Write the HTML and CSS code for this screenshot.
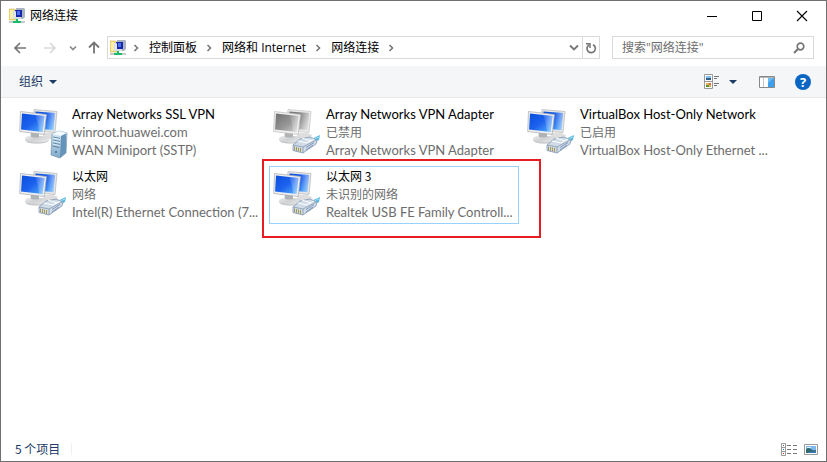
FILE: index.html
```html
<!DOCTYPE html>
<html lang="zh-CN">
<head>
<meta charset="utf-8">
<meta name="viewport" content="width=device-width, initial-scale=1">
<title>网络连接</title>
<link rel="stylesheet" href="styles.css">
</head>
<body>
<svg class="defs" aria-hidden="true">
  <defs>
    <linearGradient id="blue" x1="0" y1="0" x2="1" y2="1">
      <stop offset="0" stop-color="#0a4fdc"/><stop offset=".5" stop-color="#1d62ee"/><stop offset="1" stop-color="#55b4fb"/>
    </linearGradient>
    <linearGradient id="gray" x1="0" y1="0" x2="1" y2="1">
      <stop offset="0" stop-color="#707070"/><stop offset=".55" stop-color="#969696"/><stop offset="1" stop-color="#d2d2d2"/>
    </linearGradient>
    <linearGradient id="shine" x1="0" y1="0" x2="1" y2="0">
      <stop offset="0" stop-color="#fff" stop-opacity=".05"/><stop offset="1" stop-color="#fff" stop-opacity=".5"/>
    </linearGradient>
    <linearGradient id="metal" x1="0" y1="0" x2="1" y2="1">
      <stop offset="0" stop-color="#f6f6f6"/><stop offset=".5" stop-color="#cfd1d3"/><stop offset="1" stop-color="#f2f2f2"/>
    </linearGradient>
    <linearGradient id="steel" x1="0" y1="0" x2="0" y2="1">
      <stop offset="0" stop-color="#dcecf6"/><stop offset="1" stop-color="#7fa9c8"/>
    </linearGradient>
    <symbol id="stands" viewBox="0 0 50 54">
      <path d="M25 28h9l5 2q-1 4-9 4l-6-3z" fill="#dedede"/>
      <path d="M11 28h9v3q10 0 10 3 0 4.500-12 4.500-12 0-12-4.500 0-3 5-3z" fill="url(#metal)"/>
      <path d="M6 34q1 3.500 12 3.500 11 0 12-3.500 0 4.500-12 4.500-12 0-12-4.500z" fill="#c2c4c6"/>
      <path d="M12 28h8v4q-4 1-8 0z" fill="#b0b3b6"/>
    </symbol>
    <symbol id="pair" viewBox="0 0 50 54">
      <use href="#stands"/>
      <path d="M15 4.500l23 2-2 21-23-2z" fill="#e4e5e6" stroke="#b4b6b8" stroke-width=".7"/>
      <path d="M16.500 6.500l19.500 1.500-1.700 17-19-1.500z" fill="url(#blue)"/>
      <path d="M28 7.500l8 .5-1.700 17-6-.5z" fill="url(#shine)"/>
      <path d="M1.500 6.500l26 3-2.300 20-24.500-3z" fill="#eeeff0" stroke="#a9abad" stroke-width=".7"/>
      <path d="M3 8.500l22.500 2.600-2 16-21.500-2.600z" fill="url(#blue)"/>
      <path d="M16 10l9.500 1.100-2 16-3.500-.4q-.5-9-4-16.700z" fill="url(#shine)"/>
    </symbol>
    <symbol id="pair-off" viewBox="0 0 50 54">
      <use href="#stands"/>
      <path d="M15 4.500l23 2-2 21-23-2z" fill="#e9e9e9" stroke="#c4c4c4" stroke-width=".7"/>
      <path d="M16.500 6.500l19.500 1.500-1.700 17-19-1.500z" fill="url(#gray)"/>
      <path d="M28 7.500l8 .5-1.700 17-6-.5z" fill="url(#shine)"/>
      <path d="M1.500 6.500l26 3-2.300 20-24.500-3z" fill="#f0f0f0" stroke="#bcbcbc" stroke-width=".7"/>
      <path d="M3 8.500l22.500 2.600-2 16-21.500-2.600z" fill="url(#gray)"/>
      <path d="M16 10l9.500 1.100-2 16-3.500-.4q-.5-9-4-16.700z" fill="url(#shine)"/>
    </symbol>
    <symbol id="plug" viewBox="0 0 50 54">
      <path d="M36 35l11-5-1 5-8 4z" fill="#58b9de"/>
      <path d="M37 35.500l9-3.500" stroke="#9fe0f5" fill="none"/>
      <path d="M27 34l10-2 7 3-1 4-13 9-10-2.500v-5.500z" fill="#d0dbe8" stroke="#8298b2" stroke-width=".8"/>
      <path d="M20 40l10 2 13-7M30 42v6" fill="none" stroke="#8499b0" stroke-width=".8"/>
      <path d="M25 36l9 2 7-4M29 33l9 3" fill="none" stroke="#fff" stroke-width="1"/>
      <path d="M33 42.500l8-5M33 45l7-5" fill="none" stroke="#6f88ad" stroke-width=".8"/>
      <path d="M21.500 41.500v4M23.500 42v4M25.500 42.500v4M27.500 43v4" stroke="#a69a58" stroke-width="1"/>
    </symbol>
    <symbol id="server" viewBox="0 0 50 54">
      <path d="M33 29l7-3 8 2-1 20-6 5-9-3z" fill="url(#steel)" stroke="#7095b2" stroke-width=".7"/>
      <path d="M33 29l9 2 6-3-8-2z" fill="#f2fafe"/>
      <path d="M42 31l5-2.500v19l-6 5z" fill="#6494b9"/>
      <path d="M34 32l7 1.500M34 35l7 1.500M34 38l7 1.500M33.500 41l7 1.500" stroke="#5684a8" stroke-width="1"/>
      <path d="M34 33l7 1.500M34 36l7 1.500M34 39l7 1.500" stroke="#fff" stroke-width=".6"/>
      <circle cx="37" cy="47" r="1" fill="#426f94"/>
    </symbol>
    <symbol id="net" viewBox="0 0 16 16">
      <path d="M0 1h5l2 1v10H0z" fill="#f5dc78" stroke="#d5b958" stroke-width=".6"/>
      <path d="M1 2h3v9H1z" fill="#fbeeaa"/>
      <path d="M7 0h8l1 1v8l-2 2H7z" fill="#a9b4c2"/>
      <path d="M4 3h8v8H4z" fill="#d7dde5"/>
      <path d="M6 2h7v7H6z" fill="#1827a8"/>
      <path d="M8 3h3v4H8z" fill="#4c72ef"/>
      <path d="M5 4l2-1v6l-2 1z" fill="#dfe6f4"/>
      <path d="M7 11h2v2h3v2H4v-2h3z" fill="#18ba6b"/>
      <path d="M0 14h4M12 14h4" stroke="#b7babd" stroke-width="1.600"/>
    </symbol>
    <symbol id="chev" viewBox="0 0 6 8"><path d="M1.500 1L4.500 4 1.500 7" fill="none" stroke="#777" stroke-width="1.600"/></symbol>
  </defs>
</svg>

<main class="window">
  <header class="titlebar">
    <svg class="ic16" aria-hidden="true"><use href="#net"/></svg>
    <h1 class="title">网络连接</h1>
    <div class="caption">
      <button aria-label="最小化"><svg width="12" height="12"><path d="M1 6.500h10" stroke="#000"/></svg></button>
      <button aria-label="最大化"><svg width="12" height="12"><path d="M1.500 1.500h9v9h-9z" stroke="#000" fill="none"/></svg></button>
      <button aria-label="关闭"><svg width="12" height="12"><path d="M1 1l10 10M11 1L1 11" stroke="#000" stroke-width="1.100"/></svg></button>
    </div>
  </header>

  <nav class="navbar">
    <button aria-label="后退"><svg width="14" height="12"><path d="M13 6H2M7 1L2 6l5 5" fill="none" stroke="#757575" stroke-width="1.700"/></svg></button>
    <button class="forward" aria-label="前进" disabled><svg width="14" height="12"><path d="M1 6h11M7 1l5 5-5 5" fill="none" stroke="#d9d9d9" stroke-width="1.700"/></svg></button>
    <button class="recent" aria-label="最近位置"><svg width="8" height="6"><path d="M1 1.500l3 3 3-3" fill="none" stroke="#888" stroke-width="1.600"/></svg></button>
    <button class="up" aria-label="上移"><svg width="12" height="13"><path d="M6 12.500V2M1 6.500l5-5 5 5" fill="none" stroke="#757575" stroke-width="1.800"/></svg></button>
    <div class="address">
      <svg class="ic16" aria-hidden="true"><use href="#net"/></svg>
      <svg class="chev first" aria-hidden="true"><use href="#chev"/></svg>
      <a href="#">控制面板</a>
      <svg class="chev" aria-hidden="true"><use href="#chev"/></svg>
      <a href="#">网络和 Internet</a>
      <svg class="chev" aria-hidden="true"><use href="#chev"/></svg>
      <a href="#">网络连接</a>
      <svg class="chev" aria-hidden="true"><use href="#chev"/></svg>
      <button class="history" aria-label="以前的位置"><svg width="10" height="7"><path d="M1 1.500l4 4 4-4" fill="none" stroke="#777" stroke-width="1.900"/></svg></button>
      <button class="refresh" aria-label="刷新"><svg width="12" height="12"><path d="M4 2.900A4.200 4.200 0 1 0 8 2.700" fill="none" stroke="#777" stroke-width="1.700"/><path d="M5 6V1.800H1" fill="none" stroke="#777" stroke-width="1.500"/></svg></button>
    </div>
    <label class="search">
      <input type="search" placeholder="搜索&quot;网络连接&quot;" aria-label="搜索">
      <svg width="12" height="12" aria-hidden="true"><circle cx="7.500" cy="4.500" r="3.300" fill="none" stroke="#777" stroke-width="1.700"/><path d="M5.200 6.800L1 11" stroke="#777" stroke-width="2"/></svg>
    </label>
  </nav>

  <div class="toolbar">
    <button class="organize">组织 <svg width="8" height="4"><path d="M0 0h8L4 4z" fill="#1b3a66"/></svg></button>
    <div class="tools">
      <button aria-label="更改视图"><svg width="16" height="16"><path d="M.5.500h8v14h-8zM.5 7.500h8" fill="#fff" stroke="#999"/><path d="M2 2h5v2H2z" fill="#82bdf0"/><path d="M2 4h5v2H2z" fill="#325f88"/><path d="M2 9h5v4H2z" fill="#e0b350"/><path d="M2 11h3v2H2z" fill="#4f963c"/><path d="M5 9h2v2H5z" fill="#e16a3d"/><path d="M10 2.500h5M10 4.500h3M10 9.500h5M10 11.500h3" stroke="#777"/></svg></button>
      <button class="more" aria-label="更多选项"><svg width="8" height="4"><path d="M0 0h8L4 4z" fill="#1b3a66"/></svg></button>
      <button class="preview" aria-label="预览窗格"><svg width="16" height="12"><path d="M.5.500h15v11H.5z" fill="#fff" stroke="#888"/><path d="M1 1.500h14" stroke="#b5b5b5"/><path d="M4.500 2v9" stroke="#c6c6c6"/><path d="M9 2h6v9H9z" fill="#3e9fea"/><path d="M9 2h6l-6 5z" fill="#6bb9f3"/></svg></button>
      <button aria-label="帮助"><span class="help">?</span></button>
    </div>
  </div>

  <ul class="items">
    <li class="item">
      <svg class="icon" aria-hidden="true"><use href="#pair"/><use href="#server"/></svg>
      <div class="text"><p class="name">Array Networks SSL VPN</p><p>winroot.huawei.com</p><p>WAN Miniport (SSTP)</p></div>
    </li>
    <li class="item">
      <svg class="icon" aria-hidden="true"><use href="#pair-off"/><use href="#plug"/></svg>
      <div class="text"><p class="name">Array Networks VPN Adapter</p><p class="zh">已禁用</p><p>Array Networks VPN Adapter</p></div>
    </li>
    <li class="item">
      <svg class="icon" aria-hidden="true"><use href="#pair"/><use href="#plug"/></svg>
      <div class="text"><p class="name">VirtualBox Host-Only Network</p><p class="zh">已启用</p><p>VirtualBox Host-Only Ethernet ...</p></div>
    </li>
    <li class="item">
      <svg class="icon" aria-hidden="true"><use href="#pair"/><use href="#plug"/></svg>
      <div class="text"><p class="name zh">以太网</p><p class="zh">网络</p><p>Intel(R) Ethernet Connection (7...</p></div>
    </li>
    <li class="item selected">
      <svg class="icon" aria-hidden="true"><use href="#pair"/><use href="#plug"/></svg>
      <div class="text"><p class="name zh">以太网 3</p><p class="zh">未识别的网络</p><p>Realtek USB FE Family Controll...</p></div>
    </li>
  </ul>

  <footer class="status">
    <span class="count">5 个项目</span>
    <button aria-label="详细信息"><svg width="16" height="13"><path d="M.5.500h4v12h-4zM.5 4.500h4M.5 8.500h4" fill="#fff" stroke="#999"/><path d="M2 2h1v1H2z" fill="#555"/><path d="M2 6h1v1H2z" fill="#36f"/><path d="M2 10h1v1H2z" fill="#e22"/><path d="M6 2.500h4M12 2.500h4M6 6.500h4M12 6.500h4M6 10.500h4M12 10.500h4" stroke="#777"/></svg></button>
    <button aria-label="大图标"><svg width="14" height="11"><path d="M.5.500h13v10H.5z" fill="#fff" stroke="#999"/><path d="M2 2h10v7H2z" fill="#7db9ee"/><path d="M2 5q3-2 5 0t5 1v3H2z" fill="#2f6b6c"/><path d="M5 8l7-1v2H4z" fill="#3a78b5"/><path d="M3 3h4v1H3z" fill="#dceefb"/></svg></button>
  </footer>
</main>
</body>
</html>
```
FILE: styles.css
```css
* { box-sizing: border-box; }

body {
  margin: 0;
  min-height: 100vh;
  padding: 1px;
  display: flex;
  background: #6f6f70;
  font: 12px/18px "Open Sans", "Noto Sans CJK SC", sans-serif;
  color: #000;
}

.defs { position: absolute; width: 0; height: 0; }

h1, p, ul { margin: 0; padding: 0; list-style: none; }

svg { display: block; flex: none; }

button {
  display: flex;
  align-items: center;
  justify-content: center;
  flex: none;
  padding: 0;
  border: 0;
  background: none;
  font: inherit;
  color: inherit;
}

a { color: inherit; text-decoration: none; }

.ic16 { width: 16px; height: 16px; }

.window {
  flex: 1;
  min-width: 0;
  display: flex;
  flex-direction: column;
  background: #fff;
}

.titlebar {
  display: flex;
  align-items: center;
  height: 29px;
  padding: 0 2px 0 8px;
  gap: 5px;
}
.title { font-size: 12px; font-weight: 400; }
.caption { display: flex; margin-left: auto; }
.caption button { width: 45px; height: 28px; }

.navbar {
  display: flex;
  align-items: center;
  padding: 6px 12px 7px;
}
.navbar > button { height: 23px; }
.forward { margin-left: 16px; }
.recent { margin-left: 12px; }
.up { margin: 0 7px 0 11px; }

.address {
  flex: 1;
  display: flex;
  align-items: center;
  height: 23px;
  padding-left: 2px;
  border: 1px solid #d9d9d9;
}
.chev { width: 6px; height: 8px; margin: 0 10px 0 9px; }
.chev.first { margin-left: 7px; }
.history { width: 16px; margin-left: auto; }
.refresh { width: 17px; height: 21px; border-left: 1px solid #d9d9d9; }

.search {
  display: flex;
  align-items: center;
  width: 202px;
  height: 23px;
  margin-left: 12px;
  padding: 0 8px 0 9px;
  border: 1px solid #d9d9d9;
}
.search input {
  flex: 1;
  min-width: 0;
  padding: 0;
  border: 0;
  outline: 0;
  background: none;
  font: inherit;
}
.search input::placeholder { color: #6d6d6d; opacity: 1; }

.toolbar {
  display: flex;
  align-items: center;
  justify-content: space-between;
  height: 32px;
  padding: 0 15px 0 18px;
  background: #f5f6f8;
  border-bottom: 1px solid #e8e8ea;
}
.organize { gap: 6px; color: #1b3a66; }
.tools { display: flex; align-items: center; }
.more { margin: 0 22px 0 9px; }
.preview { margin-right: 20px; }
.help {
  width: 16px;
  height: 16px;
  border-radius: 50%;
  background: #0b66c3;
  color: #fff;
  font-weight: 700;
  font-size: 13px;
  line-height: 16px;
}

.items {
  flex: 1;
  display: grid;
  grid-template-columns: repeat(auto-fill, 250px);
  align-content: start;
  gap: 4px;
  padding: 6px 14px;
}
.item {
  position: relative;
  display: flex;
  gap: 3px;
  padding: 0 3px;
  border: 1px solid transparent;
}
.icon { width: 50px; height: 54px; }
.text {
  flex: 1;
  min-width: 0;
  padding-bottom: 2px;
  font-family: Lato, "Noto Sans CJK SC", sans-serif;
  font-size: 13px;
  color: #6d6d6d;
  white-space: nowrap;
}
.text .name { color: #000; }
.text .zh { font-family: "Noto Sans CJK SC", sans-serif; font-size: 12px; }

.selected { border-color: #99d1ff; }
.selected::after {
  content: "";
  position: absolute;
  inset: -8px -23px -15px -8px;
  border: 2px solid #e81c23;
}

.status {
  display: flex;
  align-items: center;
  height: 24px;
  padding: 0 8px 0 14px;
  gap: 7px;
  font-family: "Noto Sans CJK SC", sans-serif;
  color: #1b3a66;
}
.count {
  margin-right: auto;
  padding-right: 11px;
  border-right: 1px solid #f0f0f0;
  line-height: 12px;
}
```
